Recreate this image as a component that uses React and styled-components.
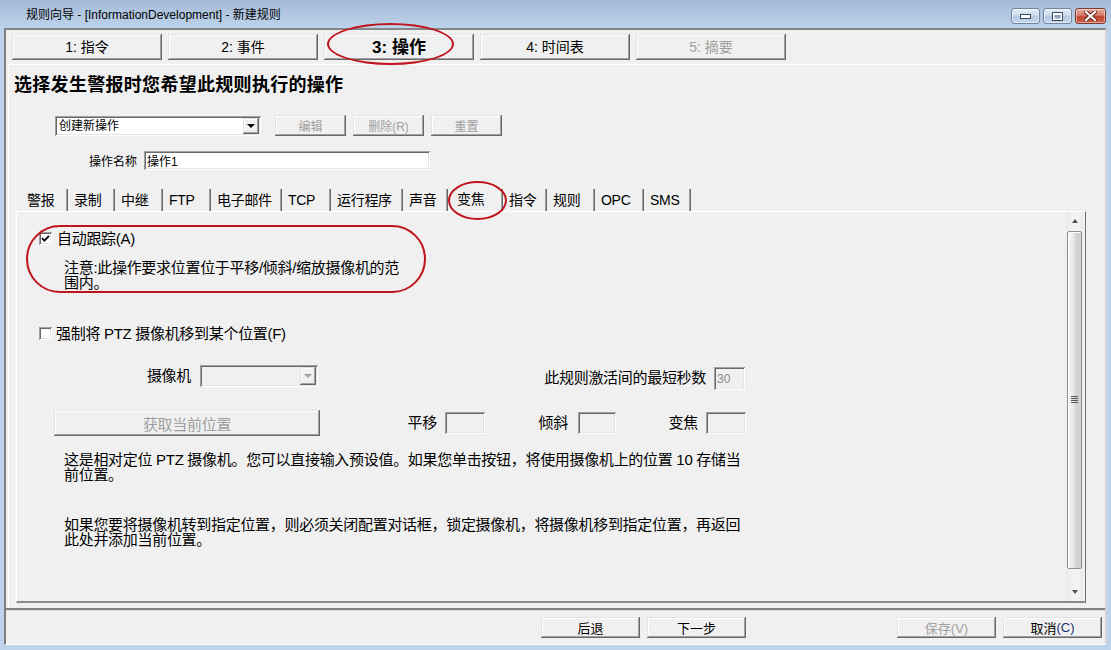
import React from "react";
import styled, { createGlobalStyle, css } from "styled-components";

const FONT = `"Liberation Sans", "Noto Sans CJK SC", sans-serif`;

const GlobalStyle = createGlobalStyle`
  html, body { margin: 0; padding: 0; }
  body { background: #bcd3eb; font-family: ${FONT}; }
  * { box-sizing: border-box; }
`;

const raised = css`
  background: #f0f0f0;
  box-shadow: inset -1px -1px #696969, inset 1px 1px #e3e3e3,
    inset -2px -2px #a0a0a0, inset 2px 2px #ffffff;
`;

const sunken = css`
  box-shadow: inset 1px 1px #a0a0a0, inset -1px -1px #ffffff,
    inset 2px 2px #696969, inset -2px -2px #e3e3e3;
`;

const Window = styled.div`
  position: relative;
  width: 1111px;
  height: 650px;
  display: flex;
  flex-direction: column;
  background: #bcd3eb;
  overflow: hidden;
  font-family: ${FONT};
  color: #000;
`;

const TitleBar = styled.div`
  height: 28px;
  flex: none;
  display: flex;
  align-items: flex-start;
  padding: 0 5px 0 26px;
  background: linear-gradient(180deg, #a3bad8 0%, #b2c8e2 55%, #bcd3eb 100%);
`;

const TitleText = styled.div`
  font-size: 12px;
  line-height: 14px;
  margin-top: 8px;
`;

const Controls = styled.div`
  margin-left: auto;
  display: flex;
  gap: 3px;
  margin-top: 8px;
`;

const CtlBtn = styled.div`
  width: ${(p) => (p.$close ? 31 : 29)}px;
  height: 16px;
  border-radius: 3px;
  border: 1px solid ${(p) => (p.$close ? "#7e3a31" : "#71859f")};
  background: ${(p) =>
    p.$close
      ? "linear-gradient(180deg,#e8ab9b 0%,#d67a67 45%,#c1472f 55%,#cc6048 100%)"
      : "linear-gradient(180deg,#e6eef8 0%,#ccdaeb 45%,#b5c9e1 55%,#c6d7eb 100%)"};
  display: flex;
  align-items: center;
  justify-content: center;
  box-shadow: inset 0 0 0 1px rgba(255, 255, 255, 0.45);
`;

const Client = styled.div`
  flex: none;
  height: 617px;
  margin: 0 4px;
  background: #f0f0f0;
  border-top: 2px solid #868686;
  border-left: 2px solid #7d7d7d;
  border-right: 2px solid #d6d6d6;
  border-bottom: 1px solid #ffffff;
  display: flex;
  flex-direction: column;
`;

const StepRow = styled.div`
  height: 30px;
  flex: none;
  display: flex;
  gap: 6px;
  padding: 4px 0 0 6px;
`;

const StepButton = styled.div`
  ${raised};
  width: 150px;
  height: 26px;
  display: flex;
  align-items: center;
  justify-content: center;
  font-size: ${(p) => (p.$active ? 17 : 14)}px;
  font-weight: ${(p) => (p.$active ? 700 : 400)};
  color: ${(p) => (p.$disabled ? "#a0a0a0" : "#000")};
  line-height: 1;
  white-space: nowrap;
`;

const MainPanel = styled.div`
  flex: none;
  height: 544px;
  margin: 4px 0 0 2px;
  width: 1097px;
  border-top: 1px solid #ffffff;
  border-left: 1px solid #ffffff;
  display: flex;
  flex-direction: column;
`;

const Heading = styled.h1`
  margin: 9px 0 0 5px;
  font-size: 18px;
  line-height: 22px;
  height: 22px;
  font-weight: 700;
  letter-spacing: 0.3px;
  white-space: nowrap;
`;

const ActionRow = styled.div`
  margin: 19px 0 0 46px;
  height: 21px;
  display: flex;
  align-items: flex-start;
`;

const Combo = styled.div`
  ${sunken};
  width: ${(p) => p.$w}px;
  height: ${(p) => p.$h || 20}px;
  margin-top: ${(p) => p.$mt || 0}px;
  background: ${(p) => (p.$disabled ? "#f0f0f0" : "#ffffff")};
  display: flex;
  align-items: center;
  padding: 0 2px 0 4px;
  font-size: 12px;
  white-space: nowrap;
`;

const ComboText = styled.span`
  flex: 1;
  line-height: 16px;
`;

const DropBtn = styled.div`
  ${raised};
  width: 16px;
  height: ${(p) => p.$h || 16}px;
  display: flex;
  align-items: center;
  justify-content: center;
`;

const Caret = styled.span`
  width: 0;
  height: 0;
  border-left: 4px solid transparent;
  border-right: 4px solid transparent;
  border-top: 4px solid ${(p) => p.$c || "#000"};
`;

const UpCaret = styled.span`
  width: 0;
  height: 0;
  border-left: 3.5px solid transparent;
  border-right: 3.5px solid transparent;
  border-bottom: 4px solid #505050;
`;

const DownCaret = styled.span`
  width: 0;
  height: 0;
  border-left: 3.5px solid transparent;
  border-right: 3.5px solid transparent;
  border-top: 4px solid #505050;
`;

const PushButton = styled.div`
  ${raised};
  width: ${(p) => p.$w}px;
  height: ${(p) => p.$h || 21}px;
  margin-left: ${(p) => p.$ml || 0}px;
  display: flex;
  align-items: center;
  justify-content: center;
  font-size: ${(p) => p.$fs || 12}px;
  color: ${(p) => (p.$disabled ? "#a0a0a0" : "#000")};
  white-space: nowrap;
  flex: none;
`;

const Mnemonic = styled.span`
  color: #1c2f6e;
`;

const NameRow = styled.div`
  margin-top: 15px;
  height: 19px;
  display: flex;
  align-items: center;
`;

const SmallLabel = styled.div`
  width: 128px;
  text-align: right;
  font-size: 12px;
  color: #000;
  margin-right: 7px;
`;

const TextField = styled.input`
  ${sunken};
  border: none;
  outline: none;
  width: ${(p) => p.$w}px;
  height: ${(p) => p.$h}px;
  margin: ${(p) => p.$mt || 0}px 0 0 0;
  padding: 0 3px;
  background: ${(p) => (p.$disabled ? "#f0f0f0" : "#ffffff")};
  font-family: ${FONT};
  font-size: 12px;
  color: ${(p) => (p.$disabled ? "#8c8c8c" : "#000")};
  flex: none;
`;

const TabStrip = styled.div`
  margin: 19px 0 0 12px;
  height: 22px;
  display: flex;
`;

const Tab = styled.div`
  width: ${(p) => p.$w}px;
  height: 22px;
  padding: ${(p) => (p.$sel ? "0 0 3px 9px" : "1px 0 0 6px")};
  font-size: 14px;
  letter-spacing: -0.3px;
  line-height: 21px;
  white-space: nowrap;
  box-shadow: inset -1px 0 #696969, inset -2px 0 #a0a0a0;
  flex: none;
`;

const TabFrame = styled.div`
  margin-left: 7px;
  width: 1070px;
  height: 392px;
  border-top: 1px solid #ffffff;
  border-left: 1px solid #ffffff;
  border-right: 1px solid #6d6d6d;
  border-bottom: 2px solid #8a8a8a;
  display: flex;
`;

const Content = styled.div`
  flex: 1;
  display: flex;
  flex-direction: column;
  padding-top: 18px;
  font-size: 15px;
  letter-spacing: -0.3px;
`;

const CheckRow = styled.div`
  margin: ${(p) => p.$mt || 0}px 0 0 22px;
  height: 17px;
  display: flex;
  align-items: center;
  gap: ${(p) => p.$gap || 5}px;
  white-space: nowrap;
  line-height: 17px;
`;

const CheckBox = styled.span`
  ${sunken};
  width: 13px;
  height: 13px;
  background: #ffffff;
  display: inline-flex;
  align-items: center;
  justify-content: center;
  flex: none;
`;

const Para = styled.p`
  margin: ${(p) => p.$mt}px 0 0 47px;
  line-height: 15px;
  white-space: nowrap;
`;

const FieldRow = styled.div`
  margin: ${(p) => p.$mt}px 0 0 ${(p) => p.$ml || 0}px;
  height: ${(p) => p.$h}px;
  display: flex;
  align-items: ${(p) => p.$align || "center"};
  white-space: nowrap;
`;

const FieldLabel = styled.div`
  width: ${(p) => p.$w}px;
  text-align: right;
  margin-right: ${(p) => p.$gap}px;
  line-height: ${(p) => p.$lh || 22}px;
  flex: none;
`;

const ScrollBar = styled.div`
  width: 17px;
  flex: none;
  margin-right: 2px;
  display: flex;
  flex-direction: column;
  align-items: center;
  background: linear-gradient(90deg, #e9e9e9, #f3f3f3 40%, #f3f3f3 70%, #e9e9e9);
`;

const ScrollArrow = styled.div`
  height: 17px;
  width: 17px;
  display: flex;
  align-items: center;
  justify-content: center;
  flex: none;
`;

const Thumb = styled.div`
  width: 15px;
  height: 338px;
  margin: 2px 0 14px;
  border: 1px solid #8f8f8f;
  border-radius: 2px;
  background: linear-gradient(90deg, #f6f6f6 0%, #e8e8e8 45%, #d6d6d6 55%, #cfcfcf 100%);
  box-shadow: inset 1px 1px #ffffff;
  display: flex;
  align-items: center;
  justify-content: center;
  flex: none;
`;

const Grip = styled.div`
  width: 7px;
  height: 8px;
  background: repeating-linear-gradient(180deg, #555 0 1px, transparent 1px 2px);
`;

const BottomBar = styled.div`
  flex: none;
  height: 36px;
  border-top: 2px solid #808080;
  box-shadow: inset 0 1px #e0e0e0;
  padding-top: 7px;
  display: flex;
  align-items: flex-start;
`;

const Annotation = styled.div`
  position: absolute;
  left: ${(p) => p.$x}px;
  top: ${(p) => p.$y}px;
  width: ${(p) => p.$w}px;
  height: ${(p) => p.$h}px;
  border: 2.5px solid #c0141c;
  border-radius: ${(p) => p.$r || "50%"};
  pointer-events: none;
`;

const TABS = [
  ["警报", 47],
  ["录制", 47],
  ["中继", 48],
  ["FTP", 48],
  ["电子邮件", 71],
  ["TCP", 49],
  ["运行程序", 72],
  ["声音", 45],
  ["变焦", 55, true],
  ["指令", 44],
  ["规则", 48],
  ["OPC", 49],
  ["SMS", 47],
];

const STEPS = [
  { label: "1: 指令" },
  { label: "2: 事件" },
  { label: "3: 操作", active: true },
  { label: "4: 时间表" },
  { label: "5: 摘要", disabled: true },
];

function MinGlyph() {
  return (
    <svg width="11" height="5" viewBox="0 0 11 5">
      <rect x="0.5" y="0.5" width="10" height="4" fill="#fff" stroke="#3c4a60" />
    </svg>
  );
}

function MaxGlyph() {
  return (
    <svg width="11" height="9" viewBox="0 0 11 9">
      <rect x="0.5" y="0.5" width="10" height="8" fill="#fff" stroke="#3c4a60" />
      <rect x="2.5" y="3" width="6" height="3.5" fill="#8ea2bd" />
    </svg>
  );
}

function CloseGlyph() {
  return (
    <svg width="13" height="10" viewBox="0 0 13 10">
      <path d="M2 1 L11 9 M11 1 L2 9" stroke="#5a1b12" strokeWidth="4" strokeLinecap="square" />
      <path d="M2 1 L11 9 M11 1 L2 9" stroke="#ffffff" strokeWidth="2.2" strokeLinecap="square" />
    </svg>
  );
}

function CheckMark() {
  return (
    <svg width="9" height="9" viewBox="0 0 9 9">
      <path d="M1 4.2 L3.4 6.6 L8 1.8" stroke="#000" strokeWidth="1.8" fill="none" />
    </svg>
  );
}

export default function App() {
  return (
    <>
      <GlobalStyle />
      <Window>
        <TitleBar>
          <TitleText>规则向导 - [InformationDevelopment] - 新建规则</TitleText>
          <Controls>
            <CtlBtn>
              <MinGlyph />
            </CtlBtn>
            <CtlBtn>
              <MaxGlyph />
            </CtlBtn>
            <CtlBtn $close>
              <CloseGlyph />
            </CtlBtn>
          </Controls>
        </TitleBar>

        <Client>
          <StepRow>
            {STEPS.map((s) => (
              <StepButton key={s.label} $active={s.active} $disabled={s.disabled}>
                {s.label}
              </StepButton>
            ))}
          </StepRow>

          <MainPanel>
            <Heading>选择发生警报时您希望此规则执行的操作</Heading>

            <ActionRow>
              <Combo $w={206} $mt={1}>
                <ComboText>创建新操作</ComboText>
                <DropBtn>
                  <Caret />
                </DropBtn>
              </Combo>
              <PushButton $w={71} $ml={14} $disabled>
                编辑
              </PushButton>
              <PushButton $w={71} $ml={7} $disabled>
                删除(R)
              </PushButton>
              <PushButton $w={71} $ml={7} $disabled>
                重置
              </PushButton>
            </ActionRow>

            <NameRow>
              <SmallLabel>操作名称</SmallLabel>
              <TextField $w={286} $h={19} readOnly value="操作1" />
            </NameRow>

            <TabStrip>
              {TABS.map(([name, w, sel]) => (
                <Tab key={name} $w={w} $sel={sel}>
                  {name}
                </Tab>
              ))}
            </TabStrip>

            <TabFrame>
              <Content>
                <CheckRow>
                  <CheckBox>
                    <CheckMark />
                  </CheckBox>
                  <span>自动跟踪(A)</span>
                </CheckRow>
                <Para $mt={13}>
                  注意:此操作要求位置位于平移/倾斜/缩放摄像机的范
                  <br />
                  围内。
                </Para>

                <CheckRow $mt={35} $gap={4}>
                  <CheckBox />
                  <span>强制将 PTZ 摄像机移到某个位置(F)</span>
                </CheckRow>

                <FieldRow $mt={23} $h={22} $align="flex-start">
                  <FieldLabel $w={174} $gap={9}>
                    摄像机
                  </FieldLabel>
                  <Combo $w={118} $h={22} $disabled>
                    <ComboText />
                    <DropBtn $h={18}>
                      <Caret $c="#a0a0a0" />
                    </DropBtn>
                  </Combo>
                  <FieldLabel $w={388} $gap={8} $lh={25}>
                    此规则激活间的最短秒数
                  </FieldLabel>
                  <TextField $w={31} $h={23} $mt={2} $disabled readOnly value="30" />
                </FieldRow>

                <FieldRow $mt={23} $h={26}>
                  <PushButton $w={266} $h={26} $ml={37} $fs={15} $disabled>
                    获取当前位置
                  </PushButton>
                  <FieldLabel $w={117} $gap={8}>
                    平移
                  </FieldLabel>
                  <TextField $w={40} $h={22} $disabled readOnly value="" />
                  <FieldLabel $w={83} $gap={10}>
                    倾斜
                  </FieldLabel>
                  <TextField $w={38} $h={22} $disabled readOnly value="" />
                  <FieldLabel $w={82} $gap={8}>
                    变焦
                  </FieldLabel>
                  <TextField $w={40} $h={22} $disabled readOnly value="" />
                </FieldRow>

                <Para $mt={16}>
                  这是相对定位 PTZ 摄像机。您可以直接输入预设值。如果您单击按钮，将使用摄像机上的位置 10 存储当
                  <br />
                  前位置。
                </Para>
                <Para $mt={35}>
                  如果您要将摄像机转到指定位置，则必须关闭配置对话框，锁定摄像机，将摄像机移到指定位置，再返回
                  <br />
                  此处并添加当前位置。
                </Para>
              </Content>

              <ScrollBar>
                <ScrollArrow>
                  <UpCaret />
                </ScrollArrow>
                <Thumb>
                  <Grip />
                </Thumb>
                <ScrollArrow>
                  <DownCaret />
                </ScrollArrow>
              </ScrollBar>
            </TabFrame>
          </MainPanel>

          <BottomBar>
            <PushButton $w={99} $ml={535} $fs={13}>
              后退
            </PushButton>
            <PushButton $w={99} $ml={7} $fs={13}>
              下一步
            </PushButton>
            <PushButton $w={99} $ml={151} $fs={13} $disabled>
              保存(V)
            </PushButton>
            <PushButton $w={99} $ml={7} $fs={13}>
              取消<Mnemonic>(C)</Mnemonic>
            </PushButton>
          </BottomBar>
        </Client>

        <Annotation $x={327} $y={23} $w={127} $h={42} />
        <Annotation $x={448} $y={181} $w={59} $h={39} />
        <Annotation $x={26} $y={225} $w={400} $h={68} $r="34px" />
      </Window>
    </>
  );
}
